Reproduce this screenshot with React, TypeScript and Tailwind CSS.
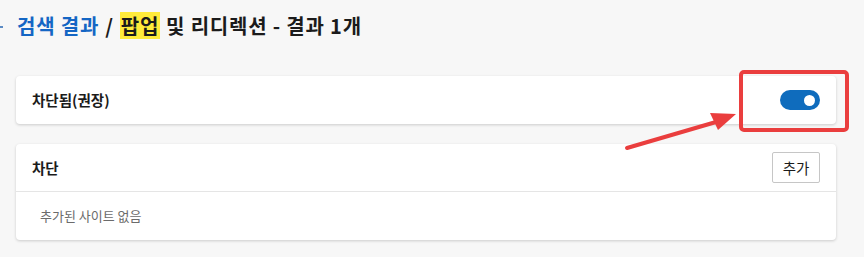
import React from "react";

const FONT = { fontFamily: '"Noto Sans CJK KR", "Noto Sans", sans-serif' };

function Toggle() {
  return (
    <div className="relative w-[40px] h-[20px] rounded-full bg-[#0f6cbd]">
      <div className="absolute right-[5px] top-[4.5px] w-[11px] h-[11px] rounded-full bg-white" />
    </div>
  );
}

export default function App() {
  return (
    <div className="relative w-[864px] h-[257px] bg-[#f7f7f7] text-[#1b1b1b] overflow-hidden" style={FONT}>
      {/* cut-off back mark */}
      <div className="absolute left-0 top-[26px] w-[3px] h-[2px] bg-[#5b8bc4]" />

      {/* Heading */}
      <div className="h-[54px] pl-[17px] pt-[12px] flex items-start">
        <h1 className="text-[20px] font-bold leading-[27px] tracking-[0.8px] flex items-center">
          <span className="text-[#1466c4]">검색 결과</span>
          <span className="mx-[6px]">/</span>
          <span className="bg-[#ffeb3b] px-[1px]">팝업</span>
          <span className="ml-[6px]">및 리디렉션 - 결과 1개</span>
        </h1>
      </div>

      <div className="pl-[16px] pt-[22px] flex flex-col gap-[20px]">
        {/* Card 1 */}
        <div className="w-[820px] h-[48px] bg-white rounded-[4px] shadow-[0_1px_3px_rgba(0,0,0,0.18)] flex items-center justify-between px-[16px]">
          <span className="text-[14.5px] font-semibold">차단됨(권장)</span>
          <Toggle />
        </div>

        {/* Card 2 */}
        <div className="w-[820px] bg-white rounded-[4px] shadow-[0_1px_3px_rgba(0,0,0,0.18)]">
          <div className="h-[48px] flex items-center justify-between px-[16px] border-b border-[#e5e5e5]">
            <span className="text-[14.5px] font-semibold">차단</span>
            <button className="w-[48px] h-[31px] border border-[#c6c6c6] rounded-[2px] bg-white text-[14.5px] text-[#1b1b1b]">
              추가
            </button>
          </div>
          <div className="h-[48px] flex items-center pl-[24px]">
            <span className="text-[13px] text-[#6b6b6b]">추가된 사이트 없음</span>
          </div>
        </div>
      </div>

      {/* Annotation overlay */}
      <svg className="absolute left-0 top-0 pointer-events-none" width="864" height="257">
        <rect x="741" y="72" width="106" height="58" rx="3" fill="none" stroke="#ea3e3e" strokeWidth="4" />
        <line x1="627" y1="148" x2="716" y2="122" stroke="#ea3e3e" strokeWidth="4" strokeLinecap="round" />
        <polygon points="736,114 710,113 718,130" fill="#ea3e3e" />
      </svg>
    </div>
  );
}
